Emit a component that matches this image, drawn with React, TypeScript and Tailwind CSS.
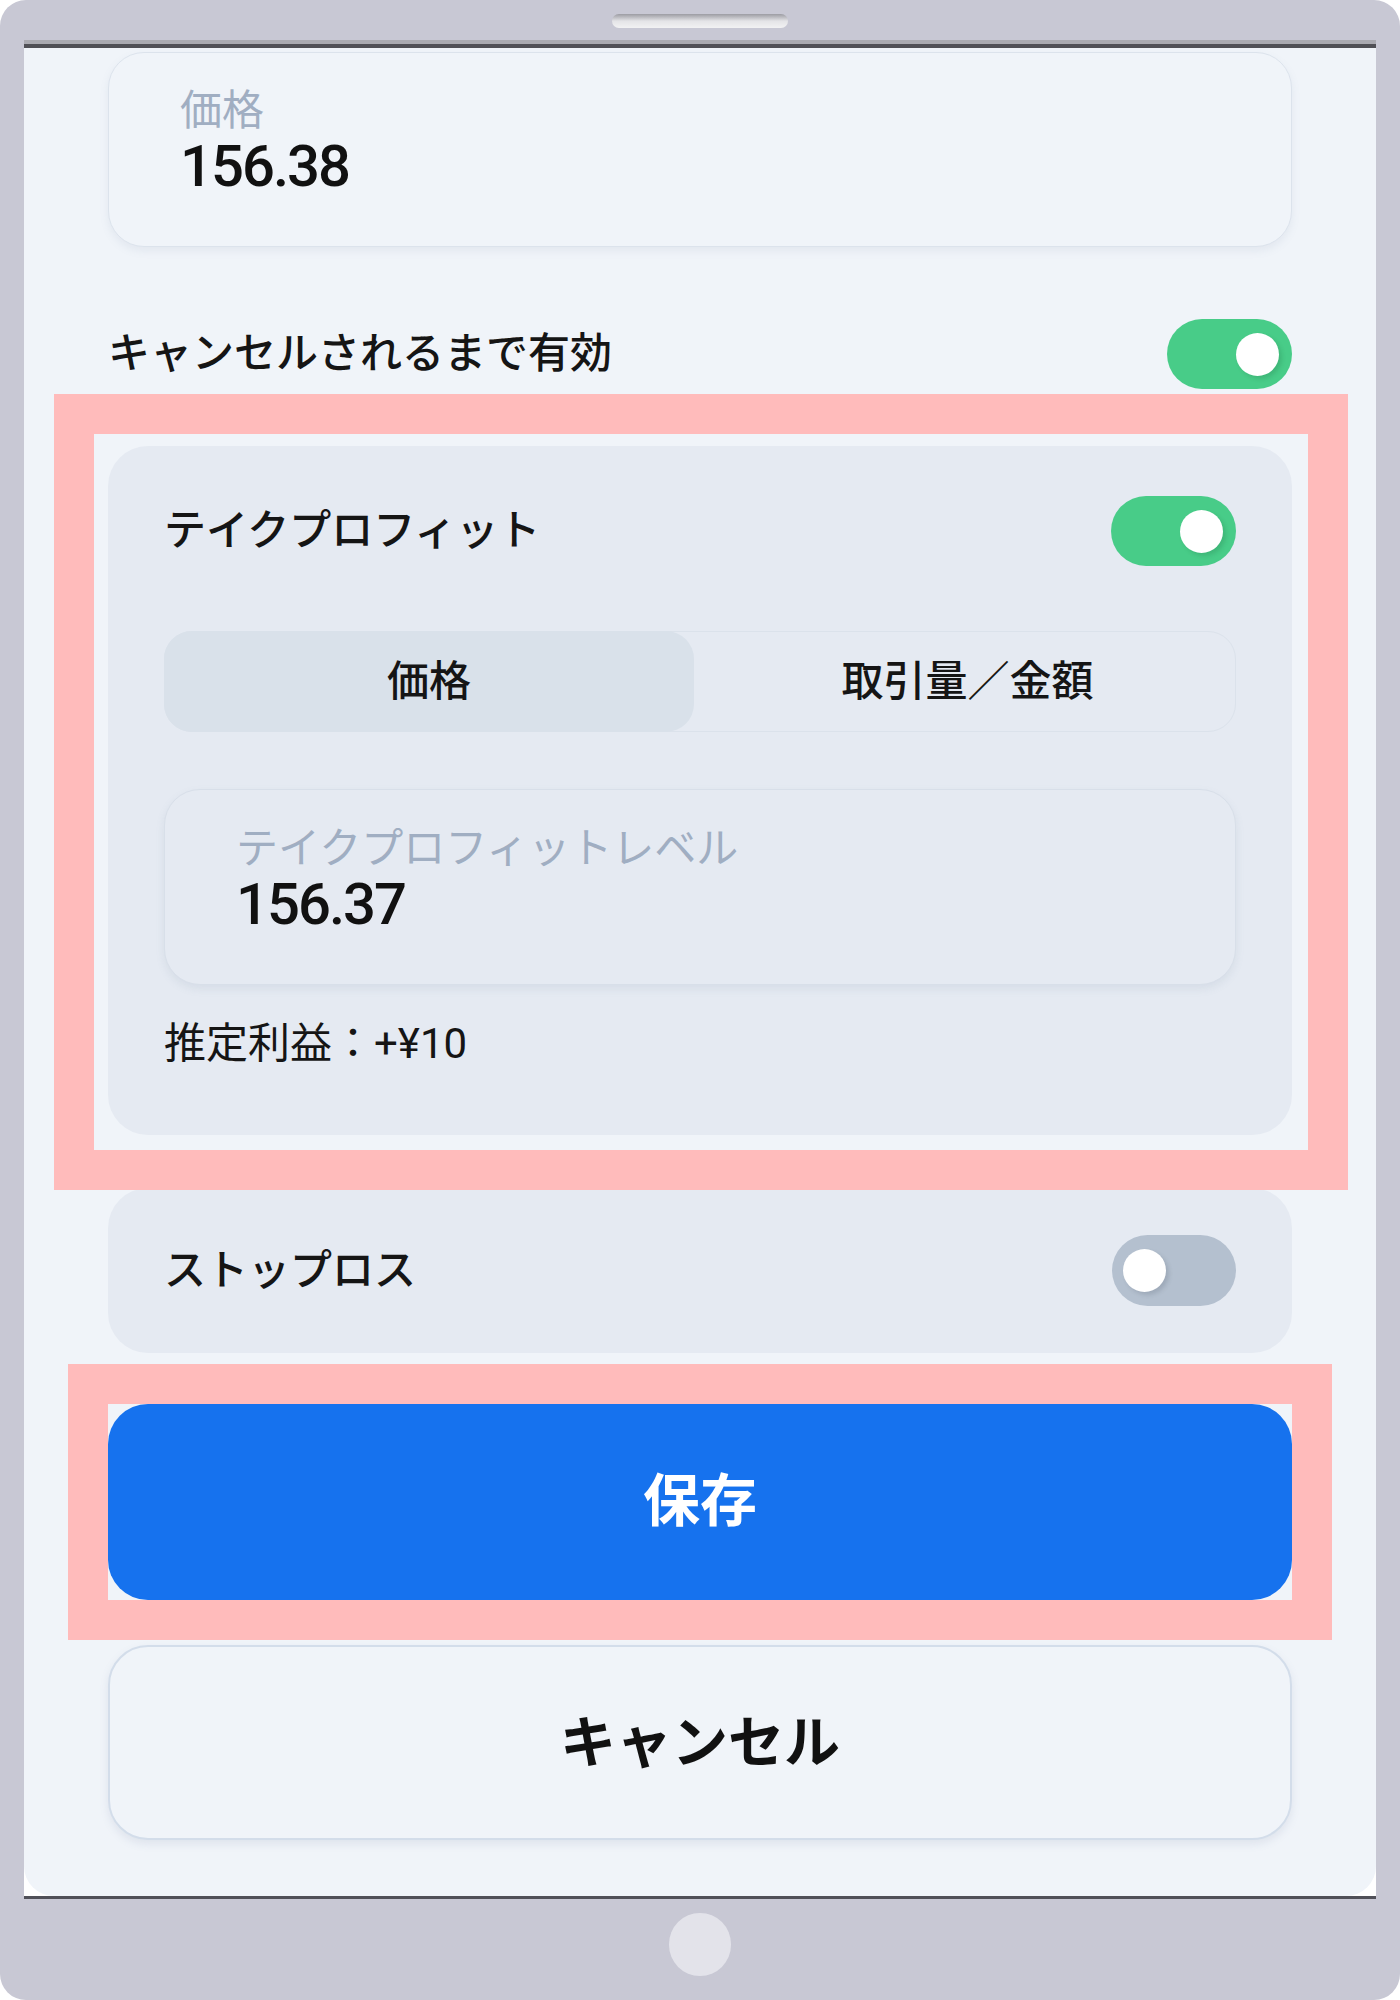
import React from "react";

function Toggle({ on }: { on: boolean }) {
  return (
    <div
      className={
        on
          ? "relative w-[125px] h-[70px] shrink-0 rounded-full bg-[#48cc88]"
          : "relative w-[124px] h-[71px] shrink-0 rounded-full bg-[#b4c0cf]"
      }
    >
      <div
        className={
          on
            ? "absolute top-[14px] right-[13px] w-[43px] h-[43px] rounded-full bg-white shadow-[3px_3px_4px_rgba(20,90,50,0.18)]"
            : "absolute top-[14px] left-[11px] w-[43px] h-[43px] rounded-full bg-white shadow-[3px_3px_4px_rgba(60,70,90,0.18)]"
        }
      />
    </div>
  );
}

export default function App() {
  return (
    <div className="relative w-[1400px] h-[2000px] bg-[#c8c8d4] rounded-[26px] overflow-hidden flex flex-col font-['Roboto','Noto_Sans_CJK_JP',sans-serif] text-[#151515]">
      {/* top bezel */}
      <div className="h-[40px] flex justify-center pt-[14px]">
        <div className="w-[176px] h-[14px] rounded-full bg-linear-to-b from-[#9c9ca3] via-[#e4e4e7] to-[#f2f2f3]" />
      </div>
      <div className="mx-[24px] h-[4px] bg-[#aaaab1]" />
      <div className="mx-[24px] h-[4px] bg-[#505056]" />

      {/* screen */}
      <div className="mx-[24px] h-[1848px] bg-white">
        <div className="h-full bg-[#f0f4f9] rounded-b-[30px] pl-[84px] pr-[84px] pt-[4px] flex flex-col">
          {/* price card */}
          <div className="h-[195px] shrink-0 rounded-[36px] border border-[#dce3ec] bg-[#f0f4f9] shadow-[0_4px_8px_rgba(110,130,160,0.10)] pl-[71px] pt-[33px] flex flex-col">
            <div className="text-[42px] leading-[50px] text-[#a0aec2]">価格</div>
            <div className="mt-[1px] text-[58px] leading-none font-medium tracking-[-2px] text-[#111]">156.38</div>
          </div>

          {/* good till cancel */}
          <div className="mt-[72px] h-[70px] flex items-center justify-between">
            <div className="text-[42px] leading-[50px] font-medium">キャンセルされるまで有効</div>
            <Toggle on />
          </div>

          {/* take profit */}
          <div className="mt-[57px] rounded-[40px] bg-[#e5eaf2] px-[56px] pt-[49px] pb-[66px] flex flex-col">
            <div className="h-[71px] flex items-center justify-between">
              <div className="text-[42px] leading-[50px] font-medium">テイクプロフィット</div>
              <Toggle on />
            </div>
            <div className="mt-[65px] h-[101px] rounded-[28px] border border-[#dbe2eb] grid grid-cols-2">
              <div className="-m-px mr-[6px] rounded-[28px] bg-[#d9e1ea] flex items-center justify-center text-[42px] font-medium">
                価格
              </div>
              <div className="flex items-center justify-center text-[42px] font-medium">取引量／金額</div>
            </div>
            <div className="mt-[57px] h-[196px] rounded-[36px] border border-[#d8dfe9] bg-[#e5eaf2] shadow-[0_4px_8px_rgba(110,130,160,0.12)] pl-[71px] pt-[34px] flex flex-col">
              <div className="text-[42px] leading-[50px] text-[#a0aec2]">テイクプロフィットレベル</div>
              <div className="mt-[1px] text-[58px] leading-none font-medium tracking-[-2px] text-[#111]">156.37</div>
            </div>
            <div className="mt-[34px] text-[42px] leading-[50px]">推定利益：+¥10</div>
          </div>

          {/* stop loss */}
          <div className="mt-[53px] h-[165px] shrink-0 rounded-[40px] bg-[#e5eaf2] px-[56px] flex items-center justify-between">
            <div className="text-[42px] leading-[50px] font-medium">ストップロス</div>
            <Toggle on={false} />
          </div>

          {/* save */}
          <div className="mt-[51px] h-[196px] shrink-0 rounded-[40px] bg-[#1672ee] flex items-center justify-center text-white text-[57px] font-bold">
            保存
          </div>

          {/* cancel */}
          <div className="mt-[45px] h-[195px] shrink-0 rounded-[40px] border-2 border-[#d3ddea] bg-[#f0f4f9] shadow-[0_4px_8px_rgba(110,130,160,0.14)] flex items-center justify-center text-[56px] font-bold text-[#111]">
            キャンセル
          </div>
        </div>
      </div>

      <div className="mx-[24px] h-[3px] bg-[#505058]" />

      {/* bottom bezel */}
      <div className="flex-1 flex justify-center pt-[14px]">
        <div className="w-[62px] h-[63px] rounded-full bg-[#e3e3ea]" />
      </div>

      {/* highlight annotations */}
      <div className="absolute left-[54px] top-[394px] w-[1294px] h-[796px] border-[40px] border-[#ffbbbb] pointer-events-none" />
      <div className="absolute left-[68px] top-[1364px] w-[1264px] h-[276px] border-[40px] border-[#ffbbbb] pointer-events-none" />
    </div>
  );
}
